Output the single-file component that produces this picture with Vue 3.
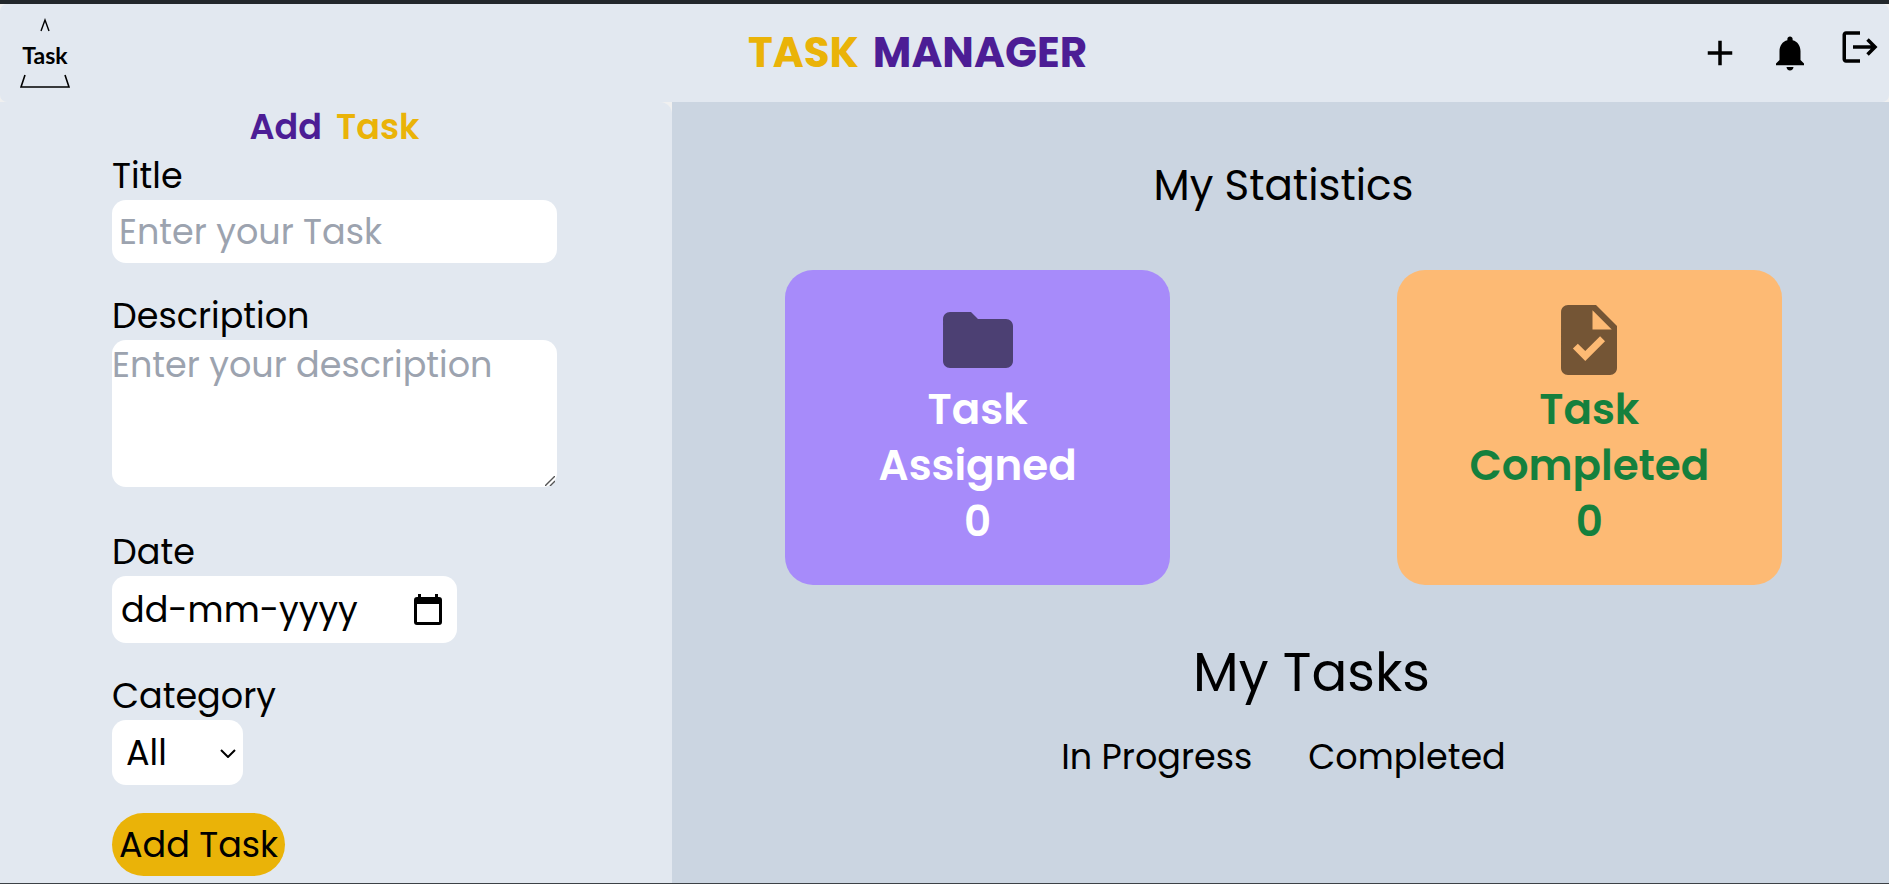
<script setup>
import { ref } from 'vue'

const title = ref('')
const description = ref('')
const date = ref('')
const category = ref('All')
const stats = [
  { id: 'assigned', top: 'Task', bottom: 'Assigned', count: 0 },
  { id: 'completed', top: 'Task', bottom: 'Completed', count: 0 },
]
</script>

<template>
  <div class="page">
    <header class="header">
      <a class="logo" href="#" aria-label="Task home">
        <svg viewBox="0 0 50 70" aria-hidden="true">
          <path d="M21 13 25 2 29 13" fill="none" stroke="#000" stroke-width="1.4" />
          <path d="M5 57 1 69H49L45 57" fill="none" stroke="#000" stroke-width="1.6" />
          <text x="25" y="46" text-anchor="middle" class="logo-text">Task</text>
        </svg>
      </a>
      <h1 class="brand"><span class="gold">TASK</span><span class="purple">MANAGER</span></h1>
      <nav class="actions">
        <button type="button" aria-label="Add">
          <svg viewBox="0 0 24 24"><path d="M19 13h-6v6h-2v-6H5v-2h6V5h2v6h6v2z" /></svg>
        </button>
        <button type="button" aria-label="Notifications">
          <svg viewBox="0 0 24 24"><path d="M12 22c1.1 0 2-.9 2-2h-4c0 1.1.89 2 2 2zm6-6v-5c0-3.07-1.64-5.64-4.5-6.32V4c0-.83-.67-1.5-1.5-1.5s-1.5.67-1.5 1.5v.68C7.63 5.36 6 7.92 6 11v5l-2 2v1h16v-1l-2-2z" /></svg>
        </button>
        <button type="button" class="logout" aria-label="Log out">
          <svg viewBox="0 0 24 24"><path d="m17 7-1.41 1.41L18.17 11H8v2h10.17l-2.58 2.58L17 17l5-5zM4 5h8V3H4c-1.1 0-2 .9-2 2v14c0 1.1.9 2 2 2h8v-2H4V5z" /></svg>
        </button>
      </nav>
    </header>

    <div class="body">
      <form class="panel" @submit.prevent>
        <h2 class="panel-title"><span class="purple">Add</span><span class="gold">Task</span></h2>
        <div class="field">
          <label for="title">Title</label>
          <input id="title" v-model="title" class="box text" type="text" placeholder="Enter your Task" />
        </div>
        <div class="field long">
          <label for="description">Description</label>
          <div class="area">
            <textarea id="description" v-model="description" class="box" placeholder="Enter your description"></textarea>
            <svg class="grip" viewBox="0 0 10 10" aria-hidden="true"><path d="M0 10 10 0M5 10 10 5" /></svg>
          </div>
        </div>
        <div class="field">
          <label for="date">Date</label>
          <div class="box date">
            <input id="date" v-model="date" type="text" placeholder="dd-mm-yyyy" />
            <button type="button" aria-label="Open calendar">
              <svg viewBox="0 0 28 32">
                <path d="M3 3H25Q28 3 28 6V28Q28 31 25 31H3Q0 31 0 28V6Q0 3 3 3ZM3 10V28H25V10Z" fill-rule="evenodd" />
                <path d="M4 0H7V4H4ZM21 0H24V4H21Z" />
              </svg>
            </button>
          </div>
        </div>
        <div class="field">
          <label for="category">Category</label>
          <div class="box select">
            <select id="category" v-model="category">
              <option>All</option>
            </select>
            <svg class="chevron" viewBox="0 0 16 9" aria-hidden="true"><path d="M1 1 8 8 15 1" /></svg>
          </div>
        </div>
        <button class="submit" type="submit">Add Task</button>
      </form>

      <main class="main">
        <h2 class="stat-title">My Statistics</h2>
        <section class="cards">
          <article v-for="s in stats" :key="s.id" class="card" :class="s.id">
            <svg viewBox="0 0 24 24" aria-hidden="true">
              <path v-if="s.id === 'assigned'" d="M10 4H4c-1.1 0-1.99.9-1.99 2L2 18c0 1.1.9 2 2 2h16c1.1 0 2-.9 2-2V8c0-1.1-.9-2-2-2h-8l-2-2z" />
              <path v-else d="M14 2H6c-1.1 0-1.99.9-1.99 2L4 20c0 1.1.89 2 1.99 2H18c1.1 0 2-.9 2-2V8l-6-6zm-3.06 16L7.4 14.46l1.41-1.41 2.12 2.12 4.24-4.24 1.41 1.41L10.94 18zM13 9V3.5L18.5 9H13z" />
            </svg>
            <span>{{ s.top }}</span>
            <span>{{ s.bottom }}</span>
            <span>{{ s.count }}</span>
          </article>
        </section>
        <h2 class="tasks-title">My Tasks</h2>
        <div class="tabs">
          <button type="button">In Progress</button>
          <button type="button">Completed</button>
        </div>
      </main>
    </div>
  </div>
</template>

<style>
body {
  margin: 0;
}
</style>

<style scoped>
* {
  box-sizing: border-box;
}
.page {
  display: flex;
  flex-direction: column;
  min-height: 100vh;
  border-top: 4px solid #22272b;
  border-bottom: 1px solid #3c4146;
  background: #f0f0f0;
  color: #000;
  font-family: Poppins, Inter, "Open Sans", sans-serif;
  font-size: 35px;
  line-height: 49px;
}
h1,
h2 {
  margin: 0;
}
button,
input,
select,
textarea {
  margin: 0;
  padding: 0;
  border: 0;
  outline: 0;
  background: none;
  color: inherit;
  font: inherit;
}
button {
  cursor: pointer;
}
svg {
  display: block;
}
.gold {
  color: #eab308;
}
.purple {
  color: #4c1d95;
}
.header {
  display: flex;
  align-items: center;
  justify-content: space-between;
  height: 98px;
  padding: 0 8px 0 20px;
  border-radius: 7px;
  background: #e2e8f0;
}
.logo svg {
  width: 50px;
  height: 70px;
}
.logo-text {
  font-family: Lato, "Open Sans", sans-serif;
  font-size: 23px;
  font-weight: 700;
}
.brand {
  display: flex;
  gap: 14px;
  margin-left: 66px;
  font-size: 42px;
  font-weight: 700;
  line-height: 56px;
}
.actions {
  display: flex;
  align-items: center;
  gap: 28px;
}
.actions svg {
  width: 42px;
  height: 42px;
}
.actions .logout {
  padding-bottom: 12px;
}
.body {
  display: grid;
  grid-template-columns: 672fr 1217fr;
  flex: 1;
}
.panel {
  display: flex;
  flex-direction: column;
  align-items: flex-start;
  gap: 28px;
  padding: 0 115px 7px 112px;
  border-top-right-radius: 12px;
  background: #e2e8f0;
}
.panel-title {
  display: flex;
  gap: 14px;
  align-self: center;
  margin-bottom: -28px;
  font-size: 35px;
  font-weight: 600;
}
.field {
  display: flex;
  flex-direction: column;
  align-items: flex-start;
  width: 100%;
}
.field.long {
  padding-bottom: 12px;
}
.box {
  border-radius: 14px;
  background: #fff;
}
.box.text {
  width: 100%;
  height: 63px;
  padding: 7px;
}
.area {
  position: relative;
  width: 100%;
}
.area textarea {
  display: block;
  width: 100%;
  height: 147px;
  resize: none;
}
.grip {
  position: absolute;
  right: 2px;
  bottom: 1px;
  width: 10px;
  height: 10px;
  fill: none;
  stroke: #555;
  stroke-width: 1.4;
  pointer-events: none;
}
::placeholder {
  color: #9ca3af;
  opacity: 1;
}
.date {
  display: flex;
  align-items: center;
  justify-content: space-between;
  width: 345px;
  height: 67px;
  padding: 0 15px 0 9px;
}
.date input {
  flex: 1;
  min-width: 0;
}
.date input::placeholder {
  color: #000;
}
.date svg {
  width: 28px;
  height: 32px;
}
.select {
  position: relative;
  width: 131px;
  height: 65px;
}
.select select {
  width: 100%;
  height: 100%;
  padding-left: 14px;
  border-radius: 14px;
  appearance: none;
}
.chevron {
  position: absolute;
  top: 29px;
  right: 7px;
  width: 16px;
  height: 9px;
  fill: none;
  stroke: #000;
  stroke-width: 2;
  pointer-events: none;
}
.submit {
  padding: 7px;
  border-radius: 32px;
  background: #eab308;
}
.main {
  display: flex;
  flex-direction: column;
  align-items: center;
  padding: 56px 0 28px 6px;
  background: #cbd5e1;
}
.stat-title {
  font-size: 42px;
  font-weight: 400;
  line-height: 56px;
}
.cards {
  display: flex;
  gap: 12vw;
  margin-top: 56px;
}
.card {
  display: flex;
  flex-direction: column;
  align-items: center;
  justify-content: center;
  width: 385px;
  height: 315px;
  padding-bottom: 7px;
  border-radius: 28px;
  font-size: 42px;
  font-weight: 600;
  line-height: 56px;
}
.card svg {
  width: 84px;
  height: 84px;
  fill: rgba(0, 0, 0, 0.54);
}
.assigned {
  background: #a78bfa;
  color: #fff;
}
.completed {
  background: #fdba74;
  color: #15803d;
}
.tasks-title {
  margin-top: 56px;
  padding-left: 56px;
  font-size: 53px;
  font-weight: 400;
  line-height: 63px;
}
.tabs {
  display: flex;
  gap: 56px;
  margin-top: 28px;
}
</style>
